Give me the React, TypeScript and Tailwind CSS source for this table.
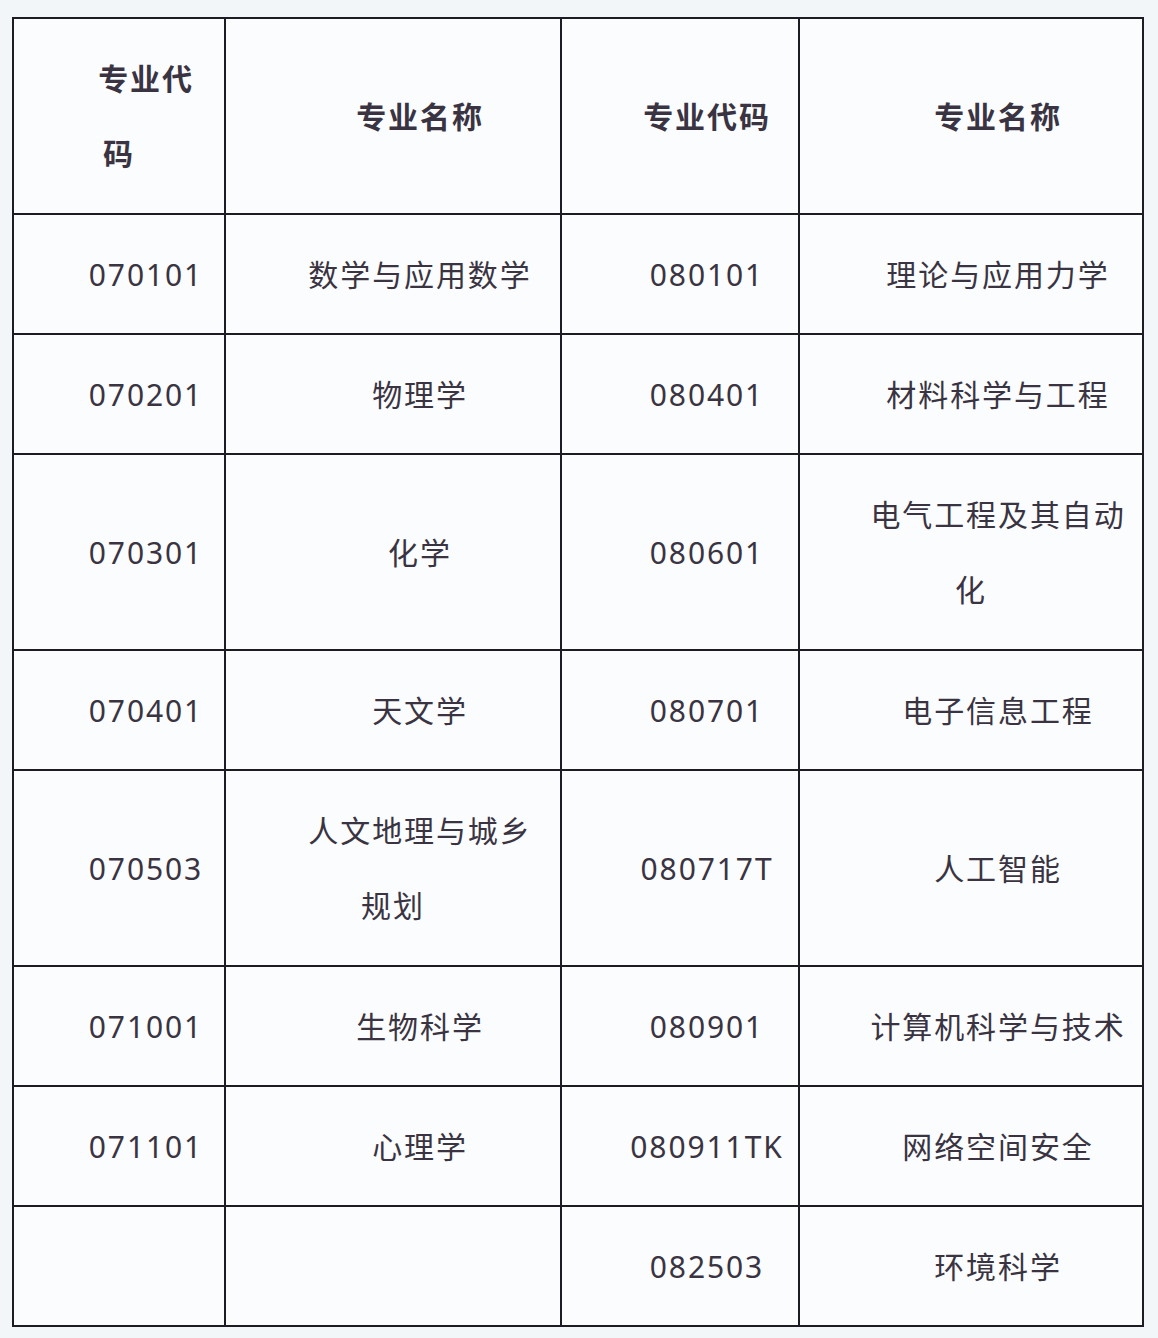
import React from 'react';

type Row = {
  code1: string;
  name1: React.ReactNode;
  code2: string;
  name2: React.ReactNode;
  tall?: boolean;
};

const rows: Row[] = [
  { code1: '070101', name1: '数学与应用数学', code2: '080101', name2: '理论与应用力学' },
  { code1: '070201', name1: '物理学', code2: '080401', name2: '材料科学与工程' },
  {
    code1: '070301',
    name1: '化学',
    code2: '080601',
    name2: (
      <>
        电气工程及其自动
        <br />化
      </>
    ),
    tall: true,
  },
  { code1: '070401', name1: '天文学', code2: '080701', name2: '电子信息工程' },
  {
    code1: '070503',
    name1: (
      <>
        人文地理与城乡
        <br />规划
      </>
    ),
    code2: '080717T',
    name2: '人工智能',
    tall: true,
  },
  { code1: '071001', name1: '生物科学', code2: '080901', name2: '计算机科学与技术' },
  { code1: '071101', name1: '心理学', code2: '080911TK', name2: '网络空间安全' },
  { code1: '', name1: '', code2: '082503', name2: '环境科学' },
];

const cell =
  'border-2 border-[#1d1b24] bg-[#fbfcfe] text-center align-middle whitespace-nowrap leading-[75px] indent-[54px] px-0';

export default function App() {
  return (
    <div
      className="min-h-[1338px] bg-[#f3f6f9] pt-[17px] pl-[12px] text-[30px] tracking-[1.9px] text-[#3a3442]"
      style={{ fontFamily: '"Noto Sans", "Noto Sans CJK SC", sans-serif' }}
    >
      <table className="table-fixed border-collapse w-[1130px]">
        <colgroup>
          <col className="w-[212px]" />
          <col className="w-[336px]" />
          <col className="w-[238px]" />
          <col className="w-[344px]" />
        </colgroup>
        <thead>
          <tr className="h-[196px] font-semibold">
            <th className={cell}>
              专业代
              <br />码
            </th>
            <th className={cell}>专业名称</th>
            <th className={cell}>专业代码</th>
            <th className={cell}>专业名称</th>
          </tr>
        </thead>
        <tbody>
          {rows.map((r, i) => (
            <tr key={i} className={r.tall ? 'h-[196px]' : 'h-[120px]'}>
              <td className={cell}>{r.code1}</td>
              <td className={cell}>{r.name1}</td>
              <td className={cell}>{r.code2}</td>
              <td className={cell}>{r.name2}</td>
            </tr>
          ))}
        </tbody>
      </table>
    </div>
  );
}
